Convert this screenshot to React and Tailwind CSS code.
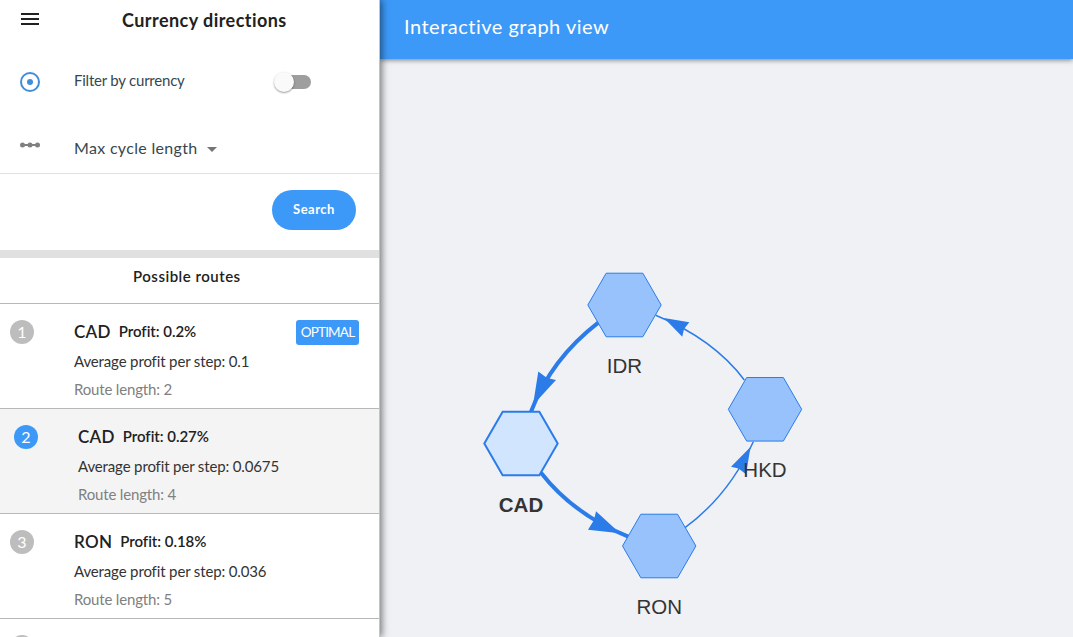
import React from "react";

const routes = [
  { id: 1, code: "CAD", profit: "0.2%", average: "0.1", length: 2, optimal: true },
  { id: 2, code: "CAD", profit: "0.27%", average: "0.0675", length: 4, active: true },
  { id: 3, code: "RON", profit: "0.18%", average: "0.036", length: 5 },
];

const nodes = [
  { id: "IDR", x: 624.5, y: 305, labelY: 373 },
  { id: "CAD", x: 521, y: 443.5, labelY: 512, selected: true },
  { id: "RON", x: 659.2, y: 546, labelY: 614 },
  { id: "HKD", x: 765, y: 409.3, labelY: 477 },
];

const edges = [
  { path: "M598.3 322.7Q551.3 358.8 531 411.7", head: "538.3,371.5 547,378 556,380 533,405", width: 4 },
  { path: "M541 472.7Q573.4 514.3 628.3 536.7", head: "596,511.3 594,520 588,529.7 620,533.3", width: 4 },
  { path: "M685 527.7Q728.9 495.3 753.3 441.7", head: "731,466.7 738.5,468.5 746,474.3 750.5,447", width: 1.5 },
  { path: "M744.3 380Q714 339.4 655.7 315.3", head: "689.3,322.3 684,329 682.3,336.7 664,318", width: 1.5 },
];

function hexagon(x, y, r) {
  const h = r * 0.866;
  return [
    [x - r, y], [x - r / 2, y - h], [x + r / 2, y - h],
    [x + r, y], [x + r / 2, y + h], [x - r / 2, y + h],
  ].map((p) => p.join(",")).join(" ");
}

function Graph() {
  return (
    <svg className="block h-[578px] w-[693px]" viewBox="380 59 693 578">
      {edges.map((e) => (
        <g key={e.path}>
          <path d={e.path} fill="none" stroke="#2b7ce9" strokeWidth={e.width} />
          <polygon points={e.head} fill="#2b7ce9" />
        </g>
      ))}
      {nodes.map((n) => (
        <g key={n.id}>
          <polygon
            points={hexagon(n.x, n.y, 36.7)}
            fill={n.selected ? "#d2e5ff" : "#97c2fc"}
            stroke="#2b7ce9"
            strokeWidth={n.selected ? 2 : 1}
          />
          <text
            x={n.x}
            y={n.labelY}
            textAnchor="middle"
            className={
              n.selected
                ? "fill-[#343434] font-['Liberation_Sans',sans-serif] text-[20.5px] font-bold"
                : "fill-[#343434] font-['Liberation_Sans',sans-serif] text-[20.5px]"
            }
          >
            {n.id}
          </text>
        </g>
      ))}
    </svg>
  );
}

function Route({ route }) {
  return (
    <li
      className={
        route.active
          ? "flex h-[105px] shrink-0 border-b border-[#b8b8b8] bg-[#f4f4f4] pl-3.5 pt-4"
          : "flex h-[105px] shrink-0 border-b border-[#b8b8b8] pl-2.5 pt-4"
      }
    >
      <span
        className={
          route.active
            ? "flex size-6 shrink-0 items-center justify-center rounded-full bg-[#3c99f8] text-base text-white"
            : "flex size-6 shrink-0 items-center justify-center rounded-full bg-[#bdbdbd] text-base text-white"
        }
      >
        {route.id}
      </span>
      <div className="ml-10 flex-1 whitespace-nowrap">
        <div className="flex h-6 items-center">
          <span className="text-[17px] font-semibold tracking-[0.3px]">{route.code}</span>
          <span className="ml-2 pb-0.5 text-[15px] font-semibold tracking-[-0.04px]">Profit: {route.profit}</span>
        </div>
        <p className="mt-[5px] h-6 text-[15px] leading-6 tracking-[-0.14px] text-[#333]">
          Average profit per step: {route.average}
        </p>
        <p className="mt-1 h-6 text-[15px] leading-6 tracking-[-0.17px] text-[#808080]">Route length: {route.length}</p>
      </div>
      {route.optimal && (
        <span className="mr-5 flex h-[25px] w-[63px] items-center justify-center rounded-[3px] bg-[#3c99f8] text-[13.5px] tracking-[-0.8px] text-white">
          OPTIMAL
        </span>
      )}
    </li>
  );
}

export default function App() {
  return (
    <div className="flex h-[637px] w-[1073px] overflow-hidden bg-[#eff1f5] font-[Lato,sans-serif] text-[#212121]">
      <aside className="z-10 flex w-[380px] shrink-0 flex-col overflow-hidden border-r border-[#c4c4c4] bg-white shadow-[2px_0_7px_rgba(0,0,0,0.5)]">
        <header className="flex h-10 shrink-0 items-center pl-[21px]">
          <svg viewBox="0 0 18 12" className="-mt-0.5 h-3 w-[18px]" aria-hidden="true">
            <path d="M0 0h18v2H0zM0 5h18v2H0zM0 10h18v2H0z" fill="#212121" />
          </svg>
          <h1 className="ml-[83px] whitespace-nowrap text-lg font-bold tracking-[0.45px]">Currency directions</h1>
        </header>
        <div className="flex h-[84px] shrink-0 items-center pl-5">
          <svg viewBox="0 0 20 20" className="size-5" aria-hidden="true">
            <circle cx="10" cy="10" r="9" fill="none" stroke="#3f8fd8" strokeWidth="2" />
            <circle cx="10" cy="10" r="3" fill="#3f8fd8" />
          </svg>
          <span className="ml-[34px] w-[202px] whitespace-nowrap pb-[3px] text-[15px] tracking-[-0.22px] text-[#37474f]">
            Filter by currency
          </span>
          <span className="flex h-3.5 w-[35px] items-center rounded-full bg-[#9e9e9e]">
            <span className="-ml-0.5 size-5 shrink-0 rounded-full bg-[#fafafa] shadow-[0_1px_2px_rgba(0,0,0,0.4)]" />
          </span>
        </div>
        <div className="flex h-[50px] shrink-0 items-center border-b border-[#e0e0e0] pl-5">
          <svg viewBox="0 0 20 6" className="mb-[7px] h-1.5 w-5" aria-hidden="true">
            <path d="M2 3h16" stroke="#808080" strokeWidth="2" />
            <circle cx="2.5" cy="3" r="2.5" fill="#808080" />
            <circle cx="10" cy="3" r="2.5" fill="#808080" />
            <circle cx="17.5" cy="3" r="2.5" fill="#808080" />
          </svg>
          <span className="ml-[34px] whitespace-nowrap pb-0.5 text-base tracking-[0.32px] text-[#37474f]">
            Max cycle length
          </span>
          <svg viewBox="0 0 10 5" className="ml-[9px] mt-0.5 h-[5px] w-2.5" aria-hidden="true">
            <path d="M0 0h10L5 5z" fill="#757575" />
          </svg>
        </div>
        <div className="flex h-[84px] shrink-0 items-start justify-end border-b-8 border-[#e0e0e0] pr-[23px] pt-4">
          <button className="h-10 w-[84px] rounded-full bg-[#3c99f8] text-[13px] font-bold tracking-[0.5px] text-white">
            Search
          </button>
        </div>
        <h2 className="h-[46px] shrink-0 border-b border-[#b8b8b8] pl-[133px] pt-[5px] text-[15px] font-semibold leading-[26px] tracking-[0.5px]">
          Possible routes
        </h2>
        <ul className="flex flex-col">
          {routes.map((r) => (
            <Route key={r.id} route={r} />
          ))}
          <li className="flex h-[105px] shrink-0 pl-2.5 pt-4">
            <span className="size-6 rounded-full bg-[#bdbdbd]" />
          </li>
        </ul>
      </aside>
      <main className="flex flex-1 flex-col">
        <header className="flex h-[59px] shrink-0 items-center bg-[#3c99f8] pb-[7px] pl-6 shadow-[0_1px_5px_rgba(0,0,0,0.5)]">
          <h2 className="text-xl tracking-[0.5px] text-white">Interactive graph view</h2>
        </header>
        <Graph />
      </main>
    </div>
  );
}
